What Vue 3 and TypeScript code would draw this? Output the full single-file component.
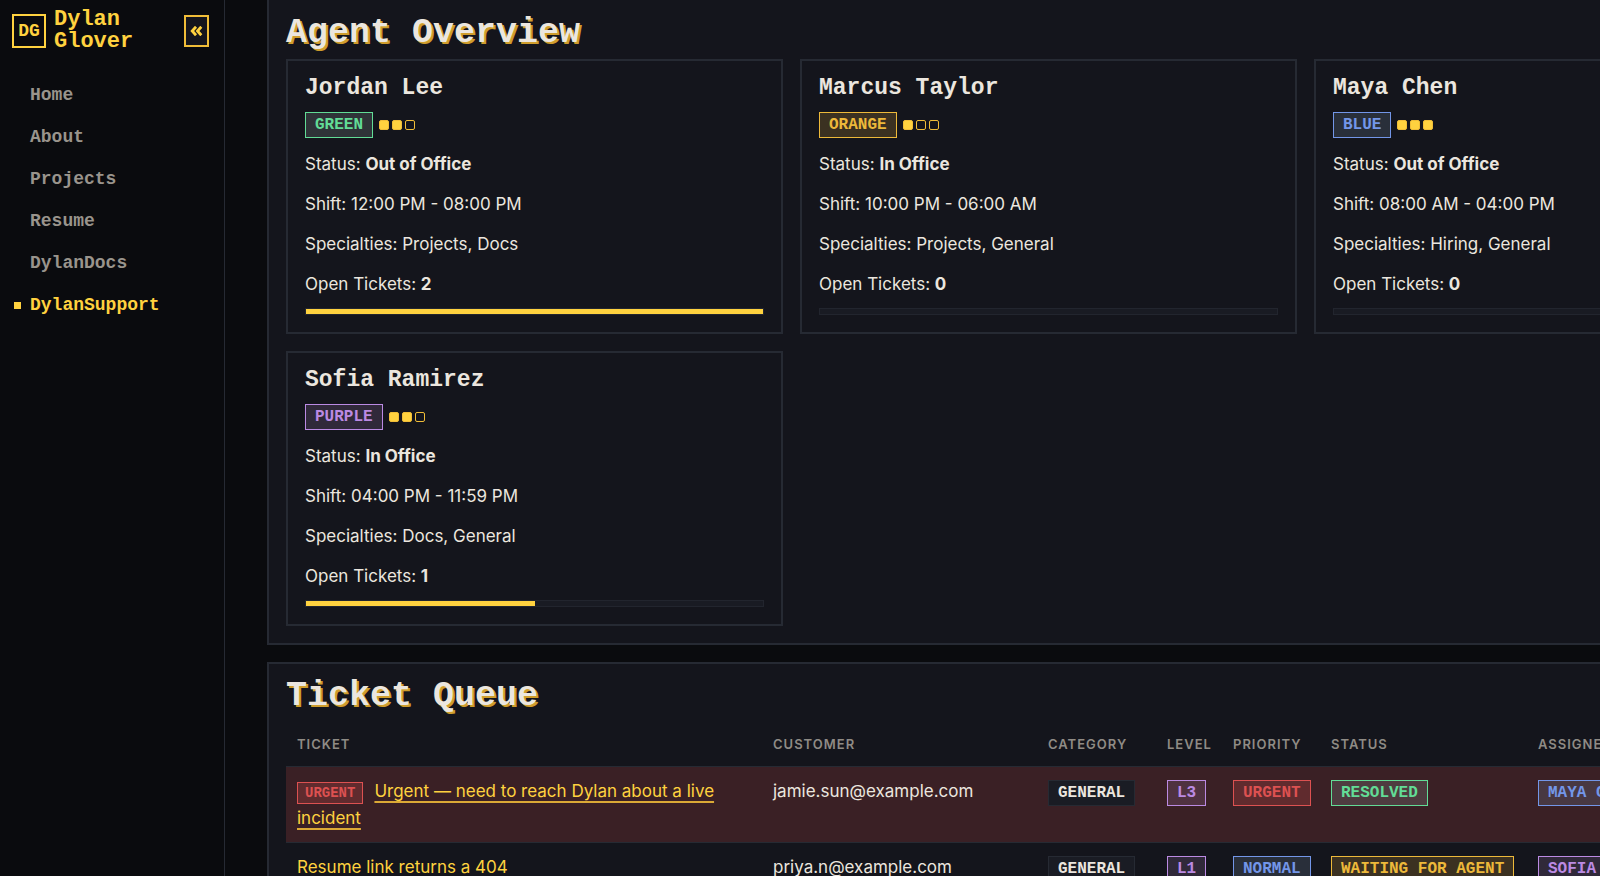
<script setup lang="ts">
type Tone = 'green' | 'orange' | 'blue' | 'purple' | 'red' | 'plain'

interface Agent {
  name: string
  tone: Tone
  level: number
  status: string
  shift: string
  specialties: string
  open: number
}

interface Ticket {
  subject: string
  urgent: boolean
  customer: string
  category: string
  level: string
  priority: string
  priorityTone: Tone
  status: string
  statusTone: Tone
  assignee: string
  assigneeTone: Tone
}

const nav = ['Home', 'About', 'Projects', 'Resume', 'DylanDocs', 'DylanSupport']
const current = 'DylanSupport'
const capacity = 2

const agents: Agent[] = [
  { name: 'Jordan Lee', tone: 'green', level: 2, status: 'Out of Office', shift: '12:00 PM - 08:00 PM', specialties: 'Projects, Docs', open: 2 },
  { name: 'Marcus Taylor', tone: 'orange', level: 1, status: 'In Office', shift: '10:00 PM - 06:00 AM', specialties: 'Projects, General', open: 0 },
  { name: 'Maya Chen', tone: 'blue', level: 3, status: 'Out of Office', shift: '08:00 AM - 04:00 PM', specialties: 'Hiring, General', open: 0 },
  { name: 'Sofia Ramirez', tone: 'purple', level: 2, status: 'In Office', shift: '04:00 PM - 11:59 PM', specialties: 'Docs, General', open: 1 },
]

const columns = ['Ticket', 'Customer', 'Category', 'Level', 'Priority', 'Status', 'Assignee']

const tickets: Ticket[] = [
  {
    subject: 'Urgent — need to reach Dylan about a live incident', urgent: true, customer: 'jamie.sun@example.com',
    category: 'General', level: 'L3', priority: 'Urgent', priorityTone: 'red', status: 'Resolved', statusTone: 'green',
    assignee: 'Maya Chen', assigneeTone: 'blue',
  },
  {
    subject: 'Resume link returns a 404', urgent: false, customer: 'priya.n@example.com',
    category: 'General', level: 'L1', priority: 'Normal', priorityTone: 'blue', status: 'Waiting for Agent', statusTone: 'orange',
    assignee: 'Sofia Ramirez', assigneeTone: 'purple',
  },
]
</script>

<template>
  <div class="shell">
    <aside class="sidebar">
      <div class="brand-row">
        <a class="brand" href="#">
          <span class="logo">DG</span>
          <span class="brand-name">Dylan Glover</span>
        </a>
        <button class="collapse" type="button" aria-label="Collapse sidebar">
          <svg width="13" height="10" viewBox="0 0 13 10" aria-hidden="true">
            <path d="M6 .7 2.200 5 6 9.300M11.300 .7 7.500 5l3.800 4.300" fill="none" stroke="currentColor" stroke-width="2.800" />
          </svg>
        </button>
      </div>
      <nav>
        <a v-for="item in nav" :key="item" href="#" class="nav-link" :class="{ active: item === current }">{{ item }}</a>
      </nav>
    </aside>

    <main class="main">
      <div class="content">
        <section class="panel first">
          <h2>Agent Overview</h2>
          <div class="cards">
            <article v-for="a in agents" :key="a.name" class="card">
              <h3>{{ a.name }}</h3>
              <div class="tags">
                <span class="badge" :class="a.tone">{{ a.tone }}</span>
                <span class="pips">
                  <i v-for="n in 3" :key="n" :class="{ on: n <= a.level }"></i>
                </span>
              </div>
              <p>Status: <strong>{{ a.status }}</strong></p>
              <p>Shift: {{ a.shift }}</p>
              <p>Specialties: {{ a.specialties }}</p>
              <p>Open Tickets: <strong>{{ a.open }}</strong></p>
              <div class="meter">
                <div class="fill" :style="{ width: (a.open / capacity) * 100 + '%' }"></div>
              </div>
            </article>
          </div>
        </section>

        <section class="panel">
          <h2>Ticket Queue</h2>
          <table>
            <colgroup>
              <col v-for="c in columns" :key="c" :class="'col-' + c.toLowerCase()">
            </colgroup>
            <thead>
              <tr>
                <th v-for="c in columns" :key="c" scope="col">{{ c }}</th>
              </tr>
            </thead>
            <tbody>
              <tr v-for="t in tickets" :key="t.subject" :class="{ hot: t.urgent }">
                <td>
                  <span v-if="t.urgent" class="badge small red">Urgent</span>
                  <a href="#" class="subject" :class="{ underlined: t.urgent }">{{ t.subject }}</a>
                </td>
                <td>{{ t.customer }}</td>
                <td><span class="badge plain">{{ t.category }}</span></td>
                <td><span class="badge purple">{{ t.level }}</span></td>
                <td><span class="badge" :class="t.priorityTone">{{ t.priority }}</span></td>
                <td><span class="badge" :class="t.statusTone">{{ t.status }}</span></td>
                <td><span class="badge" :class="t.assigneeTone">{{ t.assignee }}</span></td>
              </tr>
            </tbody>
          </table>
        </section>
      </div>
    </main>
  </div>
</template>

<style>
body {
  margin: 0;
  background: #0a0b0e;
}
</style>

<style scoped>
.shell {
  --pixel: "Liberation Mono", monospace;
  --yellow: #ffd23f;
  --line: #262a33;
  --panel: #14151c;
  --ink: #ebe6df;
  display: flex;
  height: 100vh;
  overflow: hidden;
  background: #0a0b0e;
  color: var(--ink);
  font: 17px/28px Inter, sans-serif;
}

* {
  box-sizing: border-box;
}

.sidebar {
  flex: none;
  width: 225px;
  padding: 9px 15px 0 12px;
  border-right: 1px solid var(--line);
  font-family: var(--pixel);
  font-weight: 700;
}

.brand-row {
  display: flex;
  align-items: center;
  justify-content: space-between;
}

.brand {
  display: flex;
  align-items: center;
  gap: 8px;
  color: var(--yellow);
  text-decoration: none;
}

.logo {
  display: grid;
  place-items: center;
  width: 34px;
  height: 34px;
  border: 2px solid var(--yellow);
  font-size: 18px;
  line-height: 20px;
}

.brand-name {
  width: 88px;
  font-size: 22px;
  line-height: 22px;
}

.collapse {
  display: grid;
  place-items: center;
  width: 25px;
  height: 32px;
  padding: 0;
  border: 2px solid #f0bd38;
  background: var(--panel);
  color: var(--yellow);
}

nav {
  display: flex;
  flex-direction: column;
  margin-top: 21px;
}

.nav-link {
  display: flex;
  align-items: center;
  height: 42px;
  padding-left: 18px;
  color: #99948c;
  font-size: 18px;
  text-decoration: none;
}

.nav-link.active {
  gap: 9px;
  padding-left: 2px;
  color: var(--yellow);
}

.nav-link.active::before {
  content: "";
  width: 7px;
  height: 7px;
  background: var(--yellow);
}

.main {
  flex: 1;
  min-width: 0;
  padding-left: 42px;
  overflow: auto;
  scrollbar-width: none;
}

.content {
  display: flex;
  flex-direction: column;
  gap: 17px;
  min-width: 1563px;
}

.panel {
  padding: 17px;
  border: 2px solid var(--line);
  background: var(--panel);
}

.panel.first {
  padding-top: 18px;
  border-top: 0;
}

h2 {
  margin: 0 0 11px;
  font: 700 35px/30px var(--pixel);
  text-shadow: 2px 2px 0 #cf9d2c;
}

.cards {
  display: grid;
  grid-template-columns: repeat(3, 1fr);
  gap: 17px;
}

.card {
  display: flex;
  flex-direction: column;
  gap: 12px;
  padding: 17px;
  border: 2px solid var(--line);
}

h3 {
  margin: 0 0 2px;
  font: 700 23px/20px var(--pixel);
}

p {
  margin: 0;
}

.tags {
  display: flex;
  align-items: center;
  gap: 6px;
}

.badge {
  display: inline-block;
  padding: 0 9px;
  border: 1px solid;
  font: 700 16px/24px var(--pixel);
  text-transform: uppercase;
  white-space: nowrap;
}

.badge.small {
  margin-right: 11px;
  padding: 0 7px;
  font-size: 14px;
  line-height: 20px;
}

.green {
  background: rgb(170 190 190 / 18%);
  color: #62dc96;
}

.orange {
  background: rgb(240 180 60 / 18%);
  color: #edb93a;
}

.blue {
  background: rgb(140 165 200 / 18%);
  color: #7396e8;
}

.purple {
  background: rgb(190 140 210 / 17%);
  color: #bb8ae3;
}

.red {
  background: rgb(230 80 80 / 22%);
  color: #dc5151;
}

.plain {
  border-color: #262a33;
  background: #1a1c24;
  color: var(--ink);
}

.pips {
  display: flex;
  gap: 3px;
}

.pips i {
  width: 10px;
  height: 10px;
  border: 1px solid #f0bd38;
  border-radius: 2px;
}

.pips .on {
  background: var(--yellow);
}

.meter {
  height: 7px;
  margin-top: -2px;
  border: 1px solid #22252e;
  background: #191b23;
}

.fill {
  height: 5px;
  background: var(--yellow);
}

table {
  width: 100%;
  border-collapse: collapse;
  table-layout: fixed;
}

.col-ticket { width: 476px; }
.col-customer { width: 275px; }
.col-category { width: 119px; }
.col-level { width: 66px; }
.col-priority { width: 98px; }
.col-status { width: 207px; }

th {
  padding: 8px 11px;
  color: #8f8b85;
  font-size: 13px;
  font-weight: 600;
  letter-spacing: 1px;
  text-align: left;
  text-transform: uppercase;
}

tbody tr {
  border-top: 1px solid var(--line);
}

td {
  padding: 11px 11px 10px;
  line-height: 27px;
  vertical-align: top;
}

.hot {
  background: #3a2025;
}

.subject {
  color: var(--yellow);
  text-decoration: none;
}

.underlined {
  text-decoration: underline 2px #dba936;
  text-underline-offset: 4px;
}
</style>
